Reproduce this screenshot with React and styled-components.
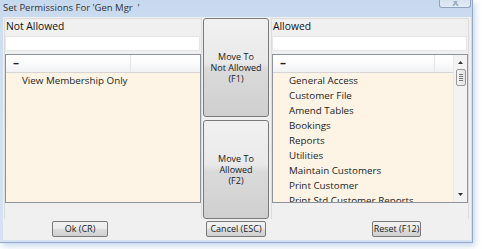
import React from "react";
import styled, { createGlobalStyle } from "styled-components";

const GlobalStyle = createGlobalStyle`
  html, body { margin: 0; padding: 0; }
  body {
    width: 482px;
    height: 249px;
    overflow: hidden;
    background: #ffffff;
    font-family: "Open Sans", "Noto Sans", sans-serif;
    color: #1a1a1a;
  }
`;

const Window = styled.div`
  width: 472px;
  height: 242px;
  display: flex;
  flex-direction: column;
  background: linear-gradient(180deg, #c6d8ee 0px, #cfdff2 30px, #d4e2f3 100%);
  border-right: 1px solid #93a9c6;
  border-bottom: 1px solid #93a9c6;
  box-shadow: 2px 3px 6px rgba(150, 185, 225, 0.55);
`;

const TitleBar = styled.div`
  height: 17px;
  display: flex;
  align-items: flex-start;
  justify-content: space-between;
  padding-left: 3px;
`;

const Title = styled.span`
  font-size: 9.5px;
  line-height: 15px;
  color: #333;
  white-space: pre;
`;

const CloseBtn = styled.div`
  width: 30px;
  height: 7px;
  margin-right: 1px;
  border: 1px solid #8fa3bd;
  border-top: none;
  border-radius: 0 0 3px 3px;
  background: linear-gradient(180deg, #d7e3f1, #e3ecf6);
  overflow: hidden;
  display: flex;
  justify-content: center;
  align-items: flex-end;
`;

const CloseGlyph = styled.svg`
  width: 9px;
  height: 5px;
  margin-bottom: 1px;
`;

const Client = styled.div`
  flex: 1;
  margin: 0 1px 2px 3px;
  background: #f0f0f0;
  display: grid;
  grid-template-columns: 198px 66px 199px;
  grid-template-rows: 201px 1fr;
  column-gap: 1px;
  padding: 1px 0 0 1px;
`;

const Panel = styled.div`
  display: flex;
  flex-direction: column;
  border: 1px solid #dcdcdc;
  border-bottom: none;
  margin-left: ${(p) => p.$ml || 0}px;
`;

const Label = styled.div`
  height: 17px;
  font-size: 10.3px;
  line-height: 15px;
  padding-left: 1px;
  color: #111;
`;

const Input = styled.div`
  height: 13px;
  margin: 0 1px 0 0;
  background: #ffffff;
  border: 1px solid #e6e6e6;
`;

const List = styled.div`
  margin-top: 3px;
  height: 147px;
  border: 1px solid #8e9299;
  background: #fdf4e6;
  display: flex;
  overflow: hidden;
`;

const ListBody = styled.div`
  flex: 1;
  display: flex;
  flex-direction: column;
  min-width: 0;
`;

const Header = styled.div`
  height: 17px;
  flex: none;
  display: flex;
  background: linear-gradient(180deg, #ffffff 0%, #fbfbfc 50%, #f1f2f4 100%);
  border-bottom: 1px solid #d5d5d5;
`;

const HeaderCell = styled.div`
  width: ${(p) => p.$w}px;
  flex: ${(p) => (p.$w ? "none" : "1")};
  border-right: ${(p) => (p.$w ? "1px solid #e3e4e6" : "none")};
  padding-left: 7px;
  font-size: 12px;
  font-weight: bold;
  line-height: 16px;
  color: #222;
`;

const Items = styled.div`
  padding-left: 16px;
  display: flex;
  flex-direction: column;
`;

const Item = styled.div`
  font-size: 9.8px;
  line-height: 15px;
  height: 15px;
  white-space: nowrap;
  color: #1c1c1c;
`;

const ScrollBar = styled.div`
  width: 13px;
  flex: none;
  background: #f3f3f3;
  border-left: 1px solid #ebebeb;
  display: flex;
  flex-direction: column;
  align-items: center;
`;

const Arrow = styled.svg`
  width: 5px;
  height: 3px;
  margin-top: ${(p) => p.$mt}px;
  margin-bottom: ${(p) => p.$mb || 0}px;
  flex: none;
`;

const Thumb = styled.div`
  width: 8px;
  height: 15px;
  margin-top: 5px;
  border: 1px solid #9a9a9a;
  border-radius: 2px;
  background: linear-gradient(90deg, #f3f3f3, #e2e2e2);
  display: flex;
  flex-direction: column;
  align-items: center;
  justify-content: center;
  gap: 1px;
`;

const Grip = styled.div`
  width: 4px;
  height: 1px;
  background: #777;
`;

const Spacer = styled.div`
  flex: 1;
`;

const MiddleCol = styled.div`
  display: flex;
  flex-direction: column;
  gap: 3px;
`;

const BigButton = styled.div`
  flex: 1;
  border: 1px solid #7a7a7a;
  border-radius: 3px;
  background: linear-gradient(180deg, #f1f1f1 0%, #e9e9e9 45%, #dadada 52%, #cfcfcf 100%);
  display: flex;
  align-items: center;
  justify-content: center;
  text-align: center;
  font-size: 9px;
  line-height: 11px;
  color: #1a1a1a;
`;

const BottomCell = styled.div`
  padding-top: 2px;
  padding-left: ${(p) => p.$pl}px;
`;

const SmallButton = styled.div`
  width: ${(p) => p.$w}px;
  height: 14px;
  border: 1px solid #7a7a7a;
  border-radius: 2px;
  background: linear-gradient(180deg, #f2f2f2 0%, #ebebeb 50%, #dddddd 51%, #d0d0d0 100%);
  font-size: 9px;
  line-height: 14px;
  text-align: center;
  color: #1a1a1a;
`;

const notAllowed = ["View Membership Only"];
const allowed = [
  "General Access",
  "Customer File",
  "Amend Tables",
  "Bookings",
  "Reports",
  "Utilities",
  "Maintain Customers",
  "Print Customer",
  "Print Std Customer Reports",
];

function PermList({ items, firstCol, scroll }) {
  return (
    <List>
      <ListBody>
        <Header>
          <HeaderCell $w={firstCol}>–</HeaderCell>
          <HeaderCell />
        </Header>
        <Items>
          {items.map((t) => (
            <Item key={t}>{t}</Item>
          ))}
        </Items>
      </ListBody>
      {scroll && (
        <ScrollBar>
          <Arrow $mt={6} viewBox="0 0 5 3">
            <path d="M2.5 0 L5 3 L0 3 Z" fill="#333" />
          </Arrow>
          <Thumb>
            <Grip />
            <Grip />
            <Grip />
            <Grip />
          </Thumb>
          <Spacer />
          <Arrow $mt={0} $mb={6} viewBox="0 0 5 3">
            <path d="M0 0 L5 0 L2.5 3 Z" fill="#333" />
          </Arrow>
        </ScrollBar>
      )}
    </List>
  );
}

export default function App() {
  return (
    <>
      <GlobalStyle />
      <Window>
        <TitleBar>
          <Title>Set Permissions For 'Gen Mgr  '</Title>
          <CloseBtn>
            <CloseGlyph viewBox="0 0 9 5">
              <path d="M1 -3 L7 5 M8 -3 L2 5" stroke="#9aaabf" strokeWidth="1.6" fill="none" />
            </CloseGlyph>
          </CloseBtn>
        </TitleBar>
        <Client>
          <Panel>
            <Label>Not Allowed</Label>
            <Input />
            <PermList items={notAllowed} firstCol={117} />
          </Panel>
          <MiddleCol>
            <BigButton>
              Move To
              <br />
              Not Allowed
              <br />
              (F1)
            </BigButton>
            <BigButton>
              Move To
              <br />
              Allowed
              <br />
              (F2)
            </BigButton>
          </MiddleCol>
          <Panel $ml={1}>
            <Label>Allowed</Label>
            <Input />
            <PermList items={allowed} firstCol={154} scroll />
          </Panel>
          <BottomCell $pl={48}>
            <SmallButton $w={54}>Ok (CR)</SmallButton>
          </BottomCell>
          <BottomCell $pl={3}>
            <SmallButton $w={58}>Cancel (ESC)</SmallButton>
          </BottomCell>
          <BottomCell $pl={102}>
            <SmallButton $w={47}>Reset (F12)</SmallButton>
          </BottomCell>
        </Client>
      </Window>
    </>
  );
}
